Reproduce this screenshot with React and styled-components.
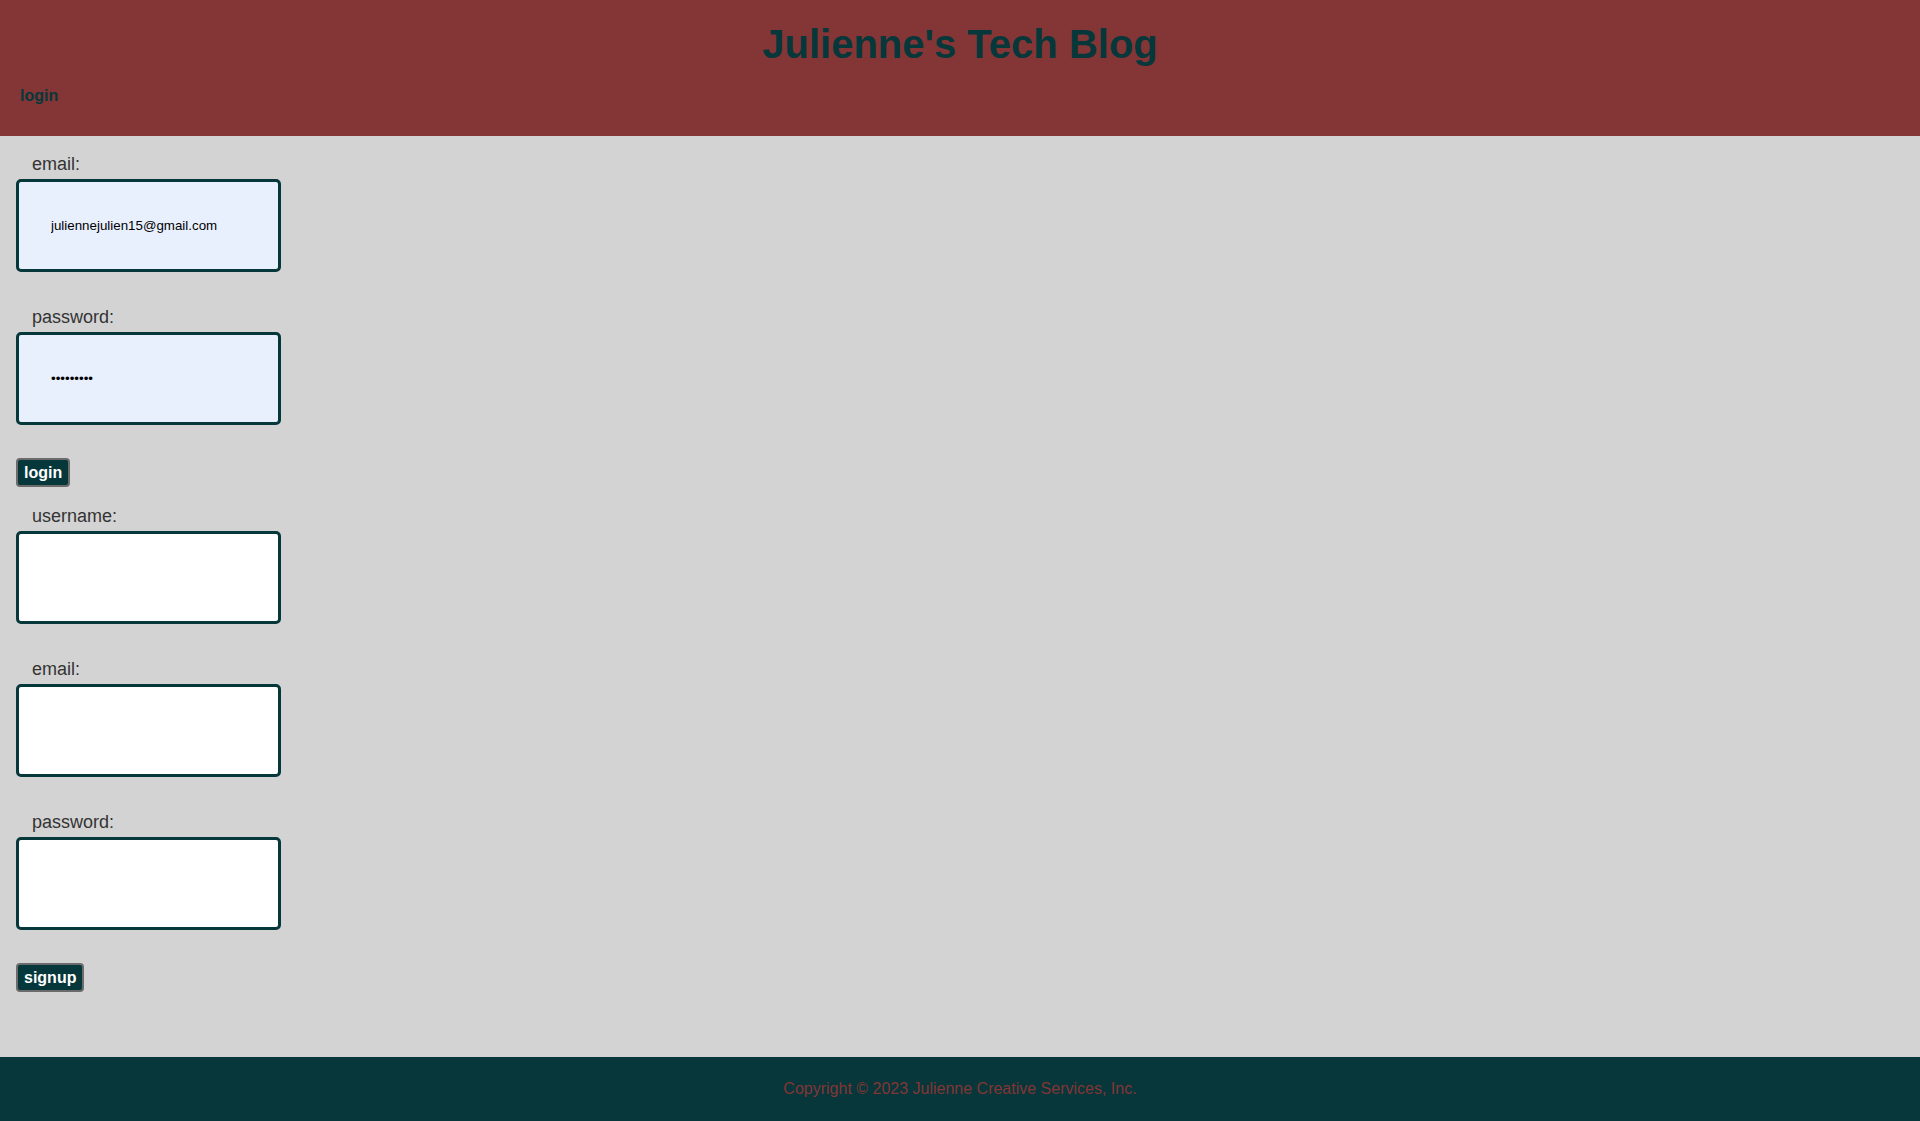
import styled, { createGlobalStyle } from "styled-components";

const GlobalStyle = createGlobalStyle`
  html, body {
    margin: 0;
    padding: 0;
  }
  body {
    font-family: "Liberation Sans", Arial, sans-serif;
    background: #d3d3d3;
  }
`

const Page = styled.div`
  min-height: 100vh;
  display: flex;
  flex-direction: column;
`

const Header = styled.header`
  background: #843535;
  padding: 21px 0 31px;
`

const Title = styled.h1`
  margin: 0;
  text-align: center;
  font-size: 40px;
  line-height: 46px;
  font-weight: 700;
  color: #06373a;
`

const Nav = styled.nav`
  margin-top: 20px;
  padding-left: 20px;
`

const NavLink = styled.a`
  font-size: 16px;
  line-height: 18px;
  font-weight: 700;
  color: #06373a;
  text-decoration: none;
  display: inline-block;
`

const Main = styled.main`
  flex: 1;
  padding: 18px 0 0 16px;
`

const Form = styled.form`
  display: flex;
  flex-direction: column;
  align-items: flex-start;
  margin-bottom: 19px;
`

const Field = styled.div`
  display: flex;
  flex-direction: column;
  gap: 4px;
  margin-bottom: 35px;
  &:last-of-type {
    margin-bottom: 0;
  }
`

const Label = styled.label`
  padding-left: 16px;
  font-size: 18px;
  line-height: 21px;
  color: #333;
`

const Input = styled.input`
  box-sizing: border-box;
  width: 265px;
  height: 93px;
  padding: 0 0 0 32px;
  border: 3px solid #06373a;
  border-radius: 5px;
  background: ${p => (p.$filled ? "#e8f0fe" : "#fff")};
  font-family: "Liberation Sans", Arial, sans-serif;
  font-size: 13.333px;
  color: #000;
  outline: none;
`

const Button = styled.button`
  box-sizing: border-box;
  margin-top: 33px;
  height: 29px;
  padding: 0 6px;
  background: #06373a;
  border: 2px solid #6b6b6b;
  border-radius: 4px;
  color: #fff;
  font-family: "Liberation Sans", Arial, sans-serif;
  font-size: 16px;
  font-weight: 700;
  line-height: 18px;
`

const Footer = styled.footer`
  background: #07373a;
  height: 64px;
  display: flex;
  align-items: center;
  justify-content: center;
  color: #843535;
  font-size: 16px;
`

function App() {
  return (
    <Page>
      <GlobalStyle />
      <Header>
        <Title>Julienne's Tech Blog</Title>
        <Nav>
          <NavLink href="#">login</NavLink>
        </Nav>
      </Header>
      <Main>
        <Form onSubmit={e => e.preventDefault()}>
          <Field>
            <Label htmlFor="email-login">email:</Label>
            <Input id="email-login" type="text" $filled defaultValue="juliennejulien15@gmail.com" />
          </Field>
          <Field>
            <Label htmlFor="password-login">password:</Label>
            <Input id="password-login" type="password" $filled defaultValue="password1" />
          </Field>
          <Button type="submit">login</Button>
        </Form>
        <Form onSubmit={e => e.preventDefault()}>
          <Field>
            <Label htmlFor="username-signup">username:</Label>
            <Input id="username-signup" type="text" />
          </Field>
          <Field>
            <Label htmlFor="email-signup">email:</Label>
            <Input id="email-signup" type="text" />
          </Field>
          <Field>
            <Label htmlFor="password-signup">password:</Label>
            <Input id="password-signup" type="password" />
          </Field>
          <Button type="submit">signup</Button>
        </Form>
      </Main>
      <Footer>Copyright © 2023 Julienne Creative Services, Inc.</Footer>
    </Page>
  );
}

export default App;
